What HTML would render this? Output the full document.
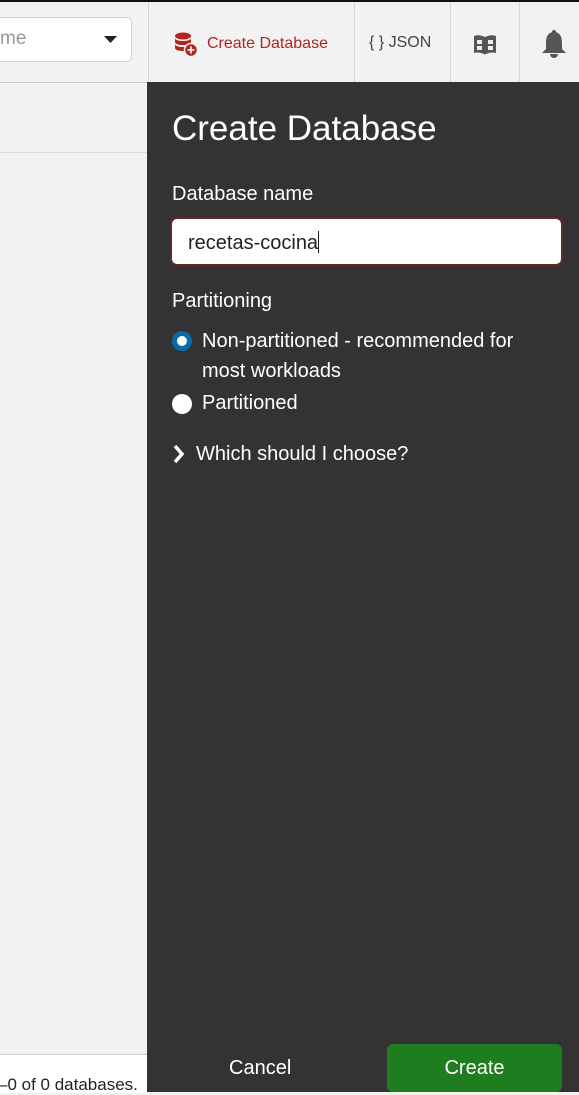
<!DOCTYPE html>
<html><head><style>
body{margin:0;width:579px;height:1092px;overflow:hidden;background:#f2f2f2;font-family:"Liberation Sans",sans-serif;position:relative}
.a{position:absolute;white-space:nowrap}
.sep{position:absolute;top:2px;height:80px;width:1px;background:#d6d6d6}
</style></head><body>
<div class="a" style="left:0;top:0;width:579px;height:2px;background:#111"></div>
<div class="a" style="left:0;top:2px;width:579px;height:80px;background:#f2f2f2;border-bottom:1px solid #c8c8c8"></div>
<div class="a" style="left:-20px;top:17px;width:150px;height:43px;background:#fff;border:1px solid #d0d0d0;border-radius:5px"></div>
<div class="a" style="left:0;top:28px;font-size:19px;color:#999">me</div>
<svg class="a" style="left:104px;top:36px" width="14" height="8"><path d="M0 0H13L6.5 7Z" fill="#222"/></svg>
<div class="sep" style="left:148px"></div><div class="sep" style="left:354px"></div><div class="sep" style="left:450px"></div><div class="sep" style="left:519px"></div>
<svg class="a" style="left:174px;top:32px" width="26" height="26" viewBox="0 0 26 26"><ellipse cx="9" cy="4" rx="8" ry="3.5" fill="#b3261e"/><path d="M1 6c0 4 16 4 16 0v4c0 4-16 4-16 0zM1 12c0 4 16 4 16 0v4c0 4-16 4-16 0z" fill="#b3261e"/><circle cx="17" cy="18" r="6.5" fill="#b3261e" stroke="#f2f2f2" stroke-width="1.5"/><path d="M17 14.5v7M13.5 18h7" stroke="#fff" stroke-width="1.6"/></svg>
<div class="a" style="left:207px;top:35px;font-size:16px;color:#b3261e">Create Database</div>
<div class="a" style="left:369px;top:34px;font-size:16px;color:#444">{ } JSON</div>
<svg class="a" style="left:472px;top:32px" width="26" height="26" viewBox="0 0 26 26"><path d="M2 4q5-2 11 1q6-3 11-1v17q-5-1.5-11 1.5q-6-3-11-1.5z" fill="#555"/><rect x="5" y="8" width="5" height="4" fill="#eee"/><rect x="5" y="14" width="5" height="4" fill="#eee"/><rect x="16" y="8" width="5" height="4" fill="#eee"/><rect x="16" y="14" width="5" height="4" fill="#eee"/></svg>
<svg class="a" style="left:540px;top:29px" width="28" height="30" viewBox="0 0 28 30"><circle cx="14" cy="3" r="2" fill="#555"/><path d="M14 3c-6 0-8 5-8 11v6l-4 4h24l-4-4v-6c0-6-2-11-8-11z" fill="#555"/><path d="M10 25a4 4 0 0 0 8 0z" fill="#555"/></svg>
<div class="a" style="left:0;top:152px;width:147px;height:1px;background:#ddd"></div>
<div class="a" style="left:0;top:1054px;width:147px;height:38px;background:#fff;border-top:1px solid #ccc"></div>
<div class="a" style="left:-2px;top:1075px;font-size:17px;color:#222">–0 of 0 databases.</div>
<div class="a" style="left:147px;top:82px;width:432px;height:1010px;background:#333"></div>
<div class="a" style="left:172px;top:109px;font-size:35px;color:#fff">Create Database</div>
<div class="a" style="left:172px;top:183px;font-size:20px;color:#fff">Database name</div>
<div class="a" style="left:170px;top:217px;width:389px;height:45px;background:#fff;border:2px solid #5a2e2a;border-radius:7px;box-shadow:0 0 0 1px #4a2a28"></div>
<div class="a" style="left:188px;top:231px;font-size:20px;color:#222">recetas-cocina<span style="display:inline-block;width:1px;height:22px;background:#222;vertical-align:-4px"></span></div>
<div class="a" style="left:172px;top:290px;font-size:20px;color:#fff">Partitioning</div>
<div class="a" style="left:172px;top:331px;width:20px;height:20px;border-radius:50%;background:#0b6aa8"></div>
<div class="a" style="left:177px;top:336px;width:10px;height:10px;border-radius:50%;background:#fff"></div>
<div class="a" style="left:202px;top:326px;font-size:20px;color:#fff;line-height:30px;width:360px">Non-partitioned - recommended for<br>most workloads</div>
<div class="a" style="left:172px;top:394px;width:20px;height:20px;border-radius:50%;background:#fff"></div>
<div class="a" style="left:202px;top:392px;font-size:20px;color:#fff">Partitioned</div>
<svg class="a" style="left:172px;top:444px" width="14" height="20"><path d="M3 2l7 8-7 8" stroke="#fff" stroke-width="3.5" fill="none"/></svg>
<div class="a" style="left:196px;top:443px;font-size:20px;color:#fff">Which should I choose?</div>
<div class="a" style="left:229px;top:1057px;font-size:20px;color:#fff">Cancel</div>
<div class="a" style="left:387px;top:1044px;width:175px;height:48px;background:#1f7c1f;border-radius:6px;color:#fff;font-size:20px;text-align:center;line-height:48px">Create</div>
</body></html>
